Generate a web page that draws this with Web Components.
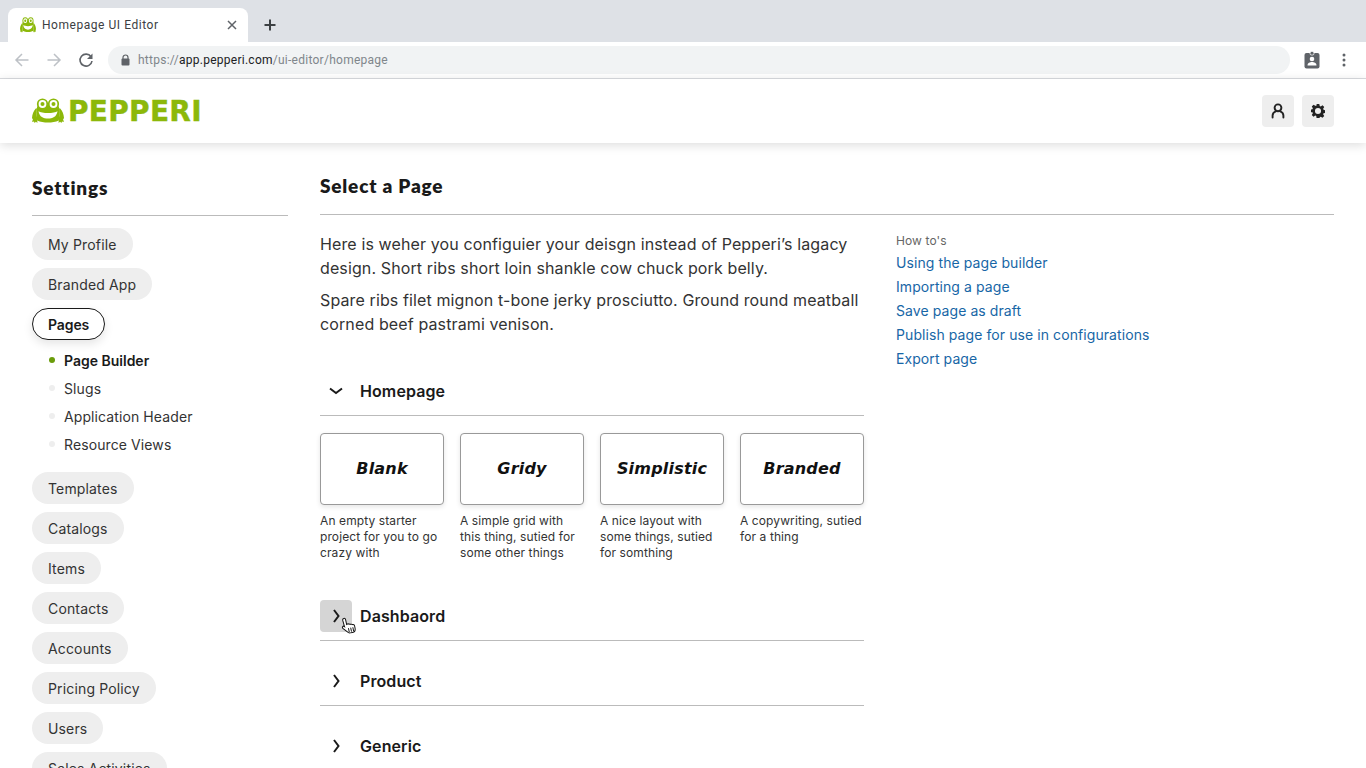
<!DOCTYPE html>
<html lang="en"><head><meta charset="utf-8"><title>Homepage UI Editor</title>
<style>
html,body{margin:0;padding:0;height:768px;overflow:hidden;background:#fff;font-family:Inter,"Liberation Sans",sans-serif;color:#1a1a1a}
body{display:flex;flex-direction:column}
</style></head><body>
<browser-chrome></browser-chrome>
<app-header></app-header>
<settings-page></settings-page>
<script>
const FROG=(s,w,h)=>`<svg width="${w}" height="${h}" viewBox="0 0 32 26" preserveAspectRatio="none" aria-hidden="true"><g fill="${s}"><circle cx="10.500" cy="6" r="5.600"/><circle cx="21.500" cy="6" r="5.600"/><path d="M6 7h20c1.500 3 2 6.500 1.500 10l-.7 5.500c-3 1.500-7 2-10.800 2s-7.800-.5-10.800-2l-.7-5.500C4 13.500 4.500 10 6 7z"/><path d="M3.800 10.500C1.500 13 .3 16 0 20c0 .8.400 1 1 .8l-.9 3.200 1.900-.6.6 1.600 1.300-1.300 1.500 1.300-.1-3.500-.6-4C4.300 15 4.500 12.500 5 10.500zM28.200 10.500c2.300 2.500 3.500 5.500 3.800 9.500 0 .8-.4 1-1 .8l.9 3.200-1.900-.6-.6 1.600-1.300-1.300-1.500 1.300.1-3.500.6-4c.3-2.500.1-5-.4-7z"/></g><circle cx="10.500" cy="6" r="3.900" fill="#fff"/><circle cx="21.500" cy="6" r="3.900" fill="#fff"/><circle cx="10.500" cy="6" r="2" fill="${s}"/><circle cx="21.500" cy="6" r="2" fill="${s}"/><path d="M6.500 13.200c3 2.400 16 2.400 19 0-1 5.800-5 7.400-9.500 7.400s-8.500-1.600-9.500-7.400z" fill="#fff"/></svg>`;
function def(name,css,html){customElements.define(name,class extends HTMLElement{constructor(){super();const t=document.createElement('template');t.innerHTML=`<style>${css}</style>${typeof html==='function'?html(this):html}`;this.attachShadow({mode:'open'}).appendChild(t.content.cloneNode(true));}});}

def('browser-chrome',`
:host{display:block;flex:none;font-family:Roboto,"Liberation Sans",sans-serif}
.strip{height:42px;background:#dee1e6;display:flex;align-items:flex-end;padding-left:8px;box-sizing:border-box}
.tab{width:240px;height:34px;background:#fff;border-radius:8px 8px 0 0;display:flex;align-items:center;box-sizing:border-box;padding-left:12px;font-size:12px;letter-spacing:.54px;color:#3c4043;position:relative}
.tab span{margin-left:6px;flex:1;white-space:nowrap}
.tab svg.x{margin-right:8px}
.plus{margin-left:14px;margin-bottom:9px;display:flex}
.bar{height:36px;border-bottom:1px solid #dadce0;display:flex;align-items:center;background:#fff;padding-left:14px;padding-right:14px}
.nav{display:flex;margin-right:14px;gap:16px}
.nav svg{display:block}
.url{flex:1;height:28px;background:#f1f3f4;border-radius:14px;display:flex;align-items:center;padding-left:12px;font-size:12px;letter-spacing:.26px;color:#80868b;white-space:nowrap;margin-right:14px}
.url svg{margin-right:7px}
.url b{font-weight:400;color:#202124}
.end{display:flex;align-items:center}
`,`<div class="strip"><div class="tab">${FROG('#8cb80a',16,16)}<span>Homepage UI Editor</span>
<svg class="x" width="16" height="16" viewBox="0 0 16 16"><path d="M4 4l8 8M12 4l-8 8" stroke="#5f6368" stroke-width="1.500"/></svg></div>
<div class="plus"><svg width="16" height="16" viewBox="0 0 16 16"><path d="M8 2.500v11M2.500 8h11" stroke="#3c4043" stroke-width="2"/></svg></div></div>
<div class="bar"><div class="nav">
<svg width="16" height="16" viewBox="0 0 16 16" fill="none" stroke="#bdc1c6" stroke-width="1.500"><path d="M14.500 8H2M8 2L2 8l6 6"/></svg>
<svg width="16" height="16" viewBox="0 0 16 16" fill="none" stroke="#bdc1c6" stroke-width="1.500"><path d="M1.500 8H14M8 2l6 6-6 6"/></svg>
<svg width="16" height="16" viewBox="0 0 16 16" fill="none"><path d="M13 4.700A6 6 0 1 0 14 9" stroke="#5f6368" stroke-width="1.600"/><path d="M14.500 1.500v5.500H9z" fill="#5f6368"/></svg></div>
<div class="url"><svg width="11" height="12" viewBox="0 0 11 12"><path d="M3 5V3.500a2.500 2.500 0 0 1 5 0V5" fill="none" stroke="#5f6368" stroke-width="1.200"/><rect x="1.500" y="4.500" width="8" height="7" rx="1" fill="#5f6368"/></svg><span>https://<b>app.pepperi.com</b>/ui-editor/homepage</span></div>
<div class="end"><svg width="16" height="18" viewBox="0 0 16 18" style="margin-right:22px"><rect x=".5" y="2" width="15" height="15.500" rx="2" fill="#5f6368"/><rect x="6" y=".5" width="4" height="3.500" rx="1.500" fill="#5f6368" stroke="#fff" stroke-width=".8"/><circle cx="8" cy="8" r="2.300" fill="#fff"/><path d="M3.500 14.500c0-2.600 2.500-3.400 4.500-3.400s4.500.8 4.500 3.400z" fill="#fff"/></svg>
<svg width="4" height="14" viewBox="0 0 4 14" style="margin-right:6px"><g fill="#5f6368"><circle cx="2" cy="2" r="1.500"/><circle cx="2" cy="7" r="1.500"/><circle cx="2" cy="12" r="1.500"/></g></svg></div></div>`);

def('app-header',`
:host{display:flex;flex:none;height:64px;align-items:center;justify-content:space-between;padding:0 32px;background:#fff;box-shadow:0 2px 10px rgba(0,0,0,.14);position:relative;z-index:1}
.logo{display:flex;align-items:center;gap:4px;color:#8cb80a;font:700 28px/1 "DejaVu Sans","Liberation Sans",sans-serif;letter-spacing:.3px}
.logo span{margin-top:2px;-webkit-text-stroke:.4px #8cb80a}
.btns{display:flex;gap:8px}
.b{width:32px;height:32px;border-radius:4px;background:#eee;display:flex;align-items:center;justify-content:center}
`,`<div class="logo">${FROG('#8cb80a',32,26)}<span>PEPPERI</span></div>
<div class="btns"><div class="b"><svg width="14" height="16" viewBox="0 0 14 16" fill="none" stroke="#222" stroke-width="1.900" stroke-linecap="round"><circle cx="7" cy="4.800" r="3.400"/><path d="M1.600 14.600v-2c0-1.900 1.200-3.400 3.100-4.200M12.400 14.600v-2c0-1.900-1.200-3.400-3.100-4.200"/></svg></div>
<div class="b"><svg width="14" height="14" viewBox="0 0 24 24"><path fill-rule="evenodd" fill="#222" d="M9.800 0h4.400l.8 3.500 1.700.7 3-1.900 3 3-1.900 3 .7 1.700 3.500.8v4.400l-3.500.8-.7 1.700 1.900 3-3 3-3-1.900-1.700.7-.8 3.500H9.800L9 20.500l-1.700-.7-3 1.900-3-3 1.900-3-.7-1.700L-1 14.200V9.800L2.500 9l.7-1.700-1.900-3 3-3 3 1.900L9 3.500zM12 6.800a5.200 5.200 0 1 0 0 10.400 5.200 5.200 0 0 0 0-10.400z"/></svg></div></div>`);

def('side-pill',`
:host{display:block;margin-bottom:8px}
span{display:inline-flex;align-items:center;height:32px;padding:0 16px;box-sizing:border-box;border-radius:16px;background:#eee;font-size:14px;letter-spacing:.15px;color:#333;white-space:nowrap}
:host([active]) span{background:#fff;border:1px solid #1a1a1a;padding:0 15px;font-weight:600;letter-spacing:-.1px;color:#1a1a1a;box-shadow:0 4px 10px rgba(0,0,0,.1)}
`,`<span><slot></slot></span>`);

def('side-sub',`
:host{display:flex;align-items:center;height:28px;padding-left:17px;font-size:14px;letter-spacing:.1px;color:#333}
i{width:6px;height:6px;border-radius:50%;background:#eee;margin-right:9px}
:host([active]){font-weight:600;letter-spacing:0;color:#1a1a1a}
:host([active]) i{background:#6a9c0a}
`,`<i></i><slot></slot>`);

def('side-nav',`
:host{display:block;width:256px;flex:none;margin-right:32px}
h2{margin:0;height:73px;box-sizing:border-box;padding-top:33px;border-bottom:1px solid #bbb;font:800 19px/24px Lato,"Liberation Sans",sans-serif;letter-spacing:.8px;color:#1a1a1a}
.list{padding-top:12px}
.sub{margin:-2px 0 14px}
`,`<h2>Settings</h2><div class="list">
<side-pill>My Profile</side-pill><side-pill>Branded App</side-pill><side-pill active>Pages</side-pill>
<div class="sub"><side-sub active>Page Builder</side-sub><side-sub>Slugs</side-sub><side-sub>Application Header</side-sub><side-sub>Resource Views</side-sub></div>
<side-pill>Templates</side-pill><side-pill>Catalogs</side-pill><side-pill>Items</side-pill><side-pill>Contacts</side-pill><side-pill>Accounts</side-pill><side-pill>Pricing Policy</side-pill><side-pill>Users</side-pill><side-pill>Sales Activities</side-pill></div>`);

def('acc-head',`
:host{display:flex;align-items:center;height:32px;padding-bottom:8px;border-bottom:1px solid #bbb;font-size:16px;font-weight:600;letter-spacing:.1px;color:#1a1a1a}
.b{width:32px;height:32px;border-radius:4px;display:flex;align-items:center;justify-content:center;margin-right:8px;position:relative;flex:none}
:host([hover]) .b{background:#d5d5d5}
.c{position:absolute;left:21px;top:16px}
`,(h)=>{const open=h.hasAttribute('open');return `<div class="b"><svg width="18" height="18" viewBox="0 0 18 18" fill="none" stroke="#1a1a1a" stroke-width="2">${open?'<path d="M3 6.500l6 4.500 6-4.500"/>':'<path d="M7 3l4.500 6L7 15"/>'}</svg>${h.hasAttribute('hover')?'<svg class="c" width="16" height="20" viewBox="0 0 16 20"><g transform="rotate(-12 8 10)"><path d="M4.500 1.500c.9 0 1.500.6 1.500 1.500v5l.9-.3c.7-.2 1.300.1 1.500.6.700-.3 1.400-.1 1.700.5.700-.2 1.400 0 1.700.6.800-.1 1.700.4 1.700 1.500v2.600c0 2-1.500 3.500-3.500 3.500H7.900c-1.200 0-2-.5-2.700-1.500L1.500 11c-.5-.8-.3-1.500.2-1.800.6-.4 1.300-.2 1.800.4L3 3C3 2.100 3.600 1.500 4.500 1.500z" fill="#fff" stroke="#111" stroke-width="1"/><path d="M7 12v4M9.300 12v4M11.500 12v4" stroke="#111" stroke-width=".9"/></g></svg>':''}</div><slot></slot>`;});

def('tpl-card',`
:host{display:block;width:124px;font-size:12px;line-height:16px;letter-spacing:.1px;color:#333}
.box{height:72px;box-sizing:border-box;border:1px solid #999;border-radius:4px;background:#fff;box-shadow:0 2px 5px rgba(0,0,0,.1);display:flex;align-items:center;justify-content:center;margin-bottom:8px;font:italic 700 16px/1 "DejaVu Sans",sans-serif;letter-spacing:.2px;color:#111}
`,(h)=>`<div class="box">${h.getAttribute('name')}</div><slot></slot>`);

def('settings-page',`
:host{display:flex;flex:1;padding-left:32px;padding-right:32px;min-height:0;overflow:hidden}
main{flex:1;min-width:0}
h1{margin:0;height:72px;box-sizing:border-box;padding-top:31px;border-bottom:1px solid #bbb;font:800 19px/24px Lato,"Liberation Sans",sans-serif;letter-spacing:.8px;color:#1a1a1a}
.cols{display:flex;gap:32px}
.left{width:544px;flex:none}
p{margin:0 0 8px;font-size:16px;line-height:24px;letter-spacing:.12px;color:#333}
.intro{padding-top:17px;margin-bottom:39px}
.cards{display:flex;gap:16px;margin:17px 0 39px}
acc-head{margin-bottom:24px}
.right{padding-top:18px;font-size:14px}
.right small{display:block;font-size:12px;line-height:16px;color:#666;margin-bottom:2px;letter-spacing:.1px}
.right a{display:block;line-height:24px;color:#1766a6;text-decoration:none;letter-spacing:.08px}
`,`<side-nav></side-nav><main><h1>Select a Page</h1><div class="cols"><div class="left">
<div class="intro"><p>Here is weher you configuier your deisgn instead of Pepperi’s lagacy design. Short ribs short loin shankle cow chuck pork belly.</p><p>Spare ribs filet mignon t-bone jerky prosciutto. Ground round meatball corned beef pastrami venison.</p></div>
<acc-head open style="margin-bottom:0">Homepage</acc-head>
<div class="cards"><tpl-card name="Blank">An empty starter project for you to go crazy with</tpl-card><tpl-card name="Gridy">A simple grid with this thing, sutied for some other things</tpl-card><tpl-card name="Simplistic">A nice layout with some things, sutied for somthing</tpl-card><tpl-card name="Branded">A copywriting, sutied for a thing</tpl-card></div>
<acc-head hover>Dashbaord</acc-head><acc-head>Product</acc-head><acc-head>Generic</acc-head>
</div><div class="right"><small>How to's</small><a href="#">Using the page builder</a><a href="#">Importing a page</a><a href="#">Save page as draft</a><a href="#">Publish page for use in configurations</a><a href="#">Export page</a></div></div></main>`);
</script>
</body></html>
